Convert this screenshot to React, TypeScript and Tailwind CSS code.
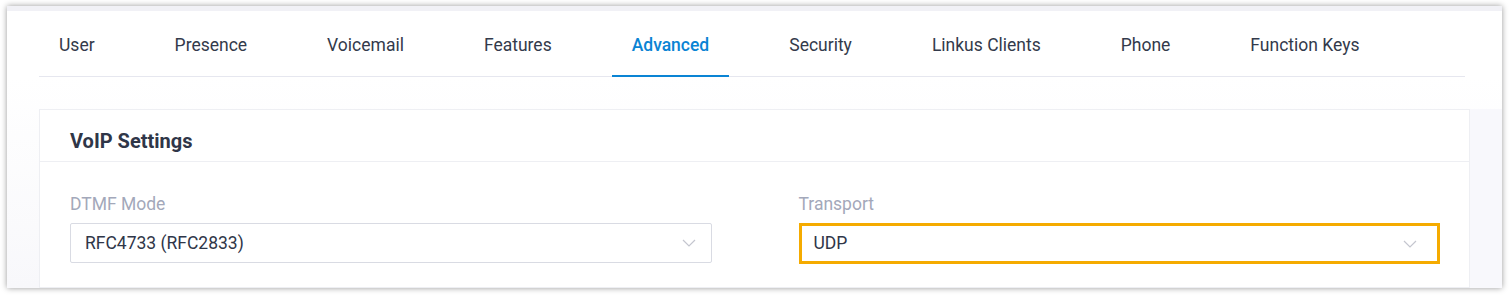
const tabs = ['User', 'Presence', 'Voicemail', 'Features', 'Advanced', 'Security', 'Linkus Clients', 'Phone', 'Function Keys']

function Chevron() {
  return (
    <svg width="14" height="8" viewBox="0 0 14 8" fill="none" className="shrink-0">
      <path d="M1 1l6 6 6-6" stroke="#c4c6cf" strokeWidth="1.2" />
    </svg>
  )
}

function Select({ label, value, active }: { label: string; value: string; active?: boolean }) {
  return (
    <div className="flex flex-col">
      <div className="h-[41px] pt-[9px] text-[17.5px] text-[#a3a8ba]">{label}</div>
      <div
        className={
          active
            ? 'flex h-[41px] items-center justify-between border-[3px] border-[#f5ab00] pl-[12px] pr-[20px] text-[17.5px] text-[#2f3648]'
            : 'flex h-[40px] items-center justify-between rounded-[2px] border border-[#d9dbe3] pl-[14px] pr-[15px] text-[17.5px] text-[#2f3648]'
        }
      >
        <span>{value}</span>
        <Chevron />
      </div>
    </div>
  )
}

export default function App() {
  return (
    <div className="h-[295px] w-[1509px] overflow-hidden bg-white font-['Roboto',sans-serif]">
      <div className="ml-[7px] mt-[6px] h-[282px] w-[1495px] overflow-hidden bg-white shadow-[0_0_6px_rgba(0,0,0,0.4)]">
        <div className="h-[5px] bg-[#f1f1f6]" />
        <div className="ml-[32px] mr-[37px] flex h-[66px] items-stretch gap-[40px] border-b border-[#e6e7ef]">
          {tabs.map((t) => (
            <div
              key={t}
              className={
                t === 'Advanced'
                  ? 'flex items-center border-b-2 border-[#0a84d4] px-[20px] pt-[4px] text-[17.5px] font-medium text-[#0a84d4] -mb-px'
                  : 'flex items-center px-[20px] pt-[4px] text-[17.5px] text-[#333a4b]'
              }
            >
              {t}
            </div>
          ))}
        </div>
        <div className="flex h-[211px] bg-gradient-to-b from-white to-[#f8f8fb] pt-[32px] pl-[32px]">
          <div className="w-[1431px] border border-[#eeeff3] bg-white">
            <div className="flex h-[52px] items-center border-b border-[#eeeff3] pl-[30px] pt-[10px] text-[20px] font-bold text-[#2f3648]">
              VoIP Settings
            </div>
            <div className="grid grid-cols-2 gap-[87px] pl-[30px] pr-[29px] pt-[20px]">
              <Select label="DTMF Mode" value="RFC4733 (RFC2833)" />
              <Select label="Transport" value="UDP" active />
            </div>
          </div>
          <div className="flex-1 bg-[#f8f8fc]" />
        </div>
      </div>
    </div>
  )
}
